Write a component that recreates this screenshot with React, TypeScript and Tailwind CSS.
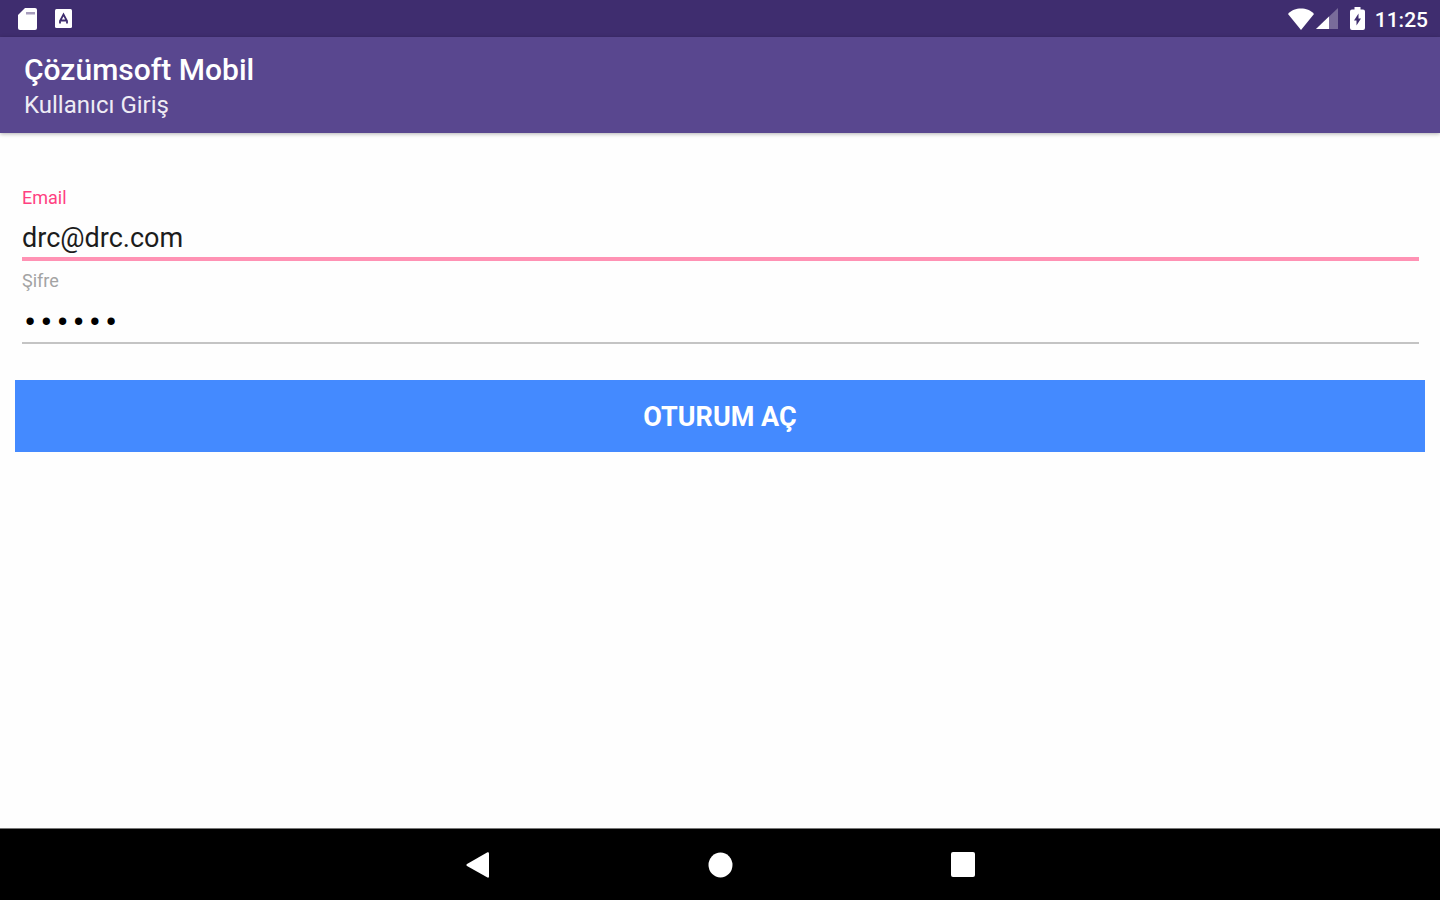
import { useState } from "react"

function StatusBar() {
  return (
    <div className="flex h-[37px] flex-none items-center justify-between bg-[#3f2d6f] pl-[18px] pr-3 text-white">
      <div className="flex items-center gap-[18px]">
        {/* SD card */}
        <svg width="19" height="22" viewBox="0 0 19 22" aria-hidden="true">
          <path d="M7 0h10a2 2 0 0 1 2 2v18a2 2 0 0 1-2 2H2a2 2 0 0 1-2-2V7z" fill="#fff" />
          <path d="M8 4h9v2.500H8z" fill="#a79dbc" />
        </svg>
        <svg width="17" height="19" viewBox="0 0 17 19" aria-hidden="true">
          <rect width="17" height="19" rx="1.500" fill="#fff" />
          <path d="M5 14.500v-2.500l3.500-6.500 3.500 6.500v2.500M6 11.500h5" fill="none" stroke="#3f2d6f" strokeWidth="1.800" />
        </svg>
      </div>
      <div className="flex items-center">
        {/* Wifi */}
        <svg width="26" height="22" viewBox="0 0 26 22" aria-hidden="true">
          <path d="M0 6C3.500 2 8 0.500 13 0.500s9.500 1.500 13 5.500L13 22z" fill="#fff" />
        </svg>
        {/* Cell signal */}
        <svg className="ml-0.5" width="22" height="21" viewBox="0 0 22 21" aria-hidden="true">
          <path d="M22 0v21H0z" fill="#fff" fillOpacity="0.3" />
          <path d="M13 8.600v12.400H0z" fill="#fff" />
        </svg>
        {/* Battery */}
        <svg className="ml-3" width="15" height="23" viewBox="0 0 15 23" aria-hidden="true">
          <path d="M4.500 0h6v2.500H13a2 2 0 0 1 2 2V21a2 2 0 0 1-2 2H2a2 2 0 0 1-2-2V4.500a2 2 0 0 1 2-2h2.500z" fill="#fff" />
          <path d="M8.500 6.500v5h2.500l-4.500 7v-5H4z" fill="#3f2d6f" />
        </svg>
        <span className="ml-2.5 pt-0.5 text-[21px] font-medium leading-6">11:25</span>
      </div>
    </div>
  )
}

function NavBar() {
  return (
    <nav className="flex h-[72px] flex-none items-center justify-center gap-[195px] border-t border-[#777] bg-black">
      <button type="button" aria-label="Back" className="flex h-12 w-12 items-center justify-center">
        <svg width="24" height="26" viewBox="0 0 24 26" aria-hidden="true">
          <path d="M22.500 0.300Q24 0 24 1.500v23q0 1.500-1.500 1L2 14q-1.500-1 0-2z" fill="#fff" />
        </svg>
      </button>
      <button type="button" aria-label="Home" className="flex h-12 w-12 items-center justify-center">
        <svg width="25" height="26" viewBox="0 0 25 26" aria-hidden="true">
          <ellipse cx="12.500" cy="13" rx="12" ry="12.500" fill="#fff" />
        </svg>
      </button>
      <button type="button" aria-label="Recent apps" className="flex h-12 w-12 items-center justify-center">
        <svg width="24" height="25" viewBox="0 0 24 25" aria-hidden="true">
          <rect width="24" height="25" rx="2" fill="#fff" />
        </svg>
      </button>
    </nav>
  )
}

export default function App() {
  const [email, setEmail] = useState("drc@drc.com")
  const [password, setPassword] = useState("123456")

  return (
    <div className="flex min-h-screen flex-col bg-[#fefefe] font-[Roboto,sans-serif]">
      <StatusBar />

      <header className="flex-none bg-[#59478f] px-6 pb-2.5 pt-[15px] text-white shadow-[0_1px_4px_rgba(0,0,0,0.3)]">
        <h1 className="text-[30px] font-medium leading-9">Çözümsoft Mobil</h1>
        <p className="text-[24px] leading-[35px] text-[#eeecf4]">Kullanıcı Giriş</p>
      </header>

      <main className="flex-1 px-[15px] pt-[53px]">
        <form onSubmit={(e) => e.preventDefault()}>
          <div className="pl-[7px] pr-1.5">
            <label htmlFor="email" className="block text-[18px] leading-6 text-[#ff4081]">
              Email
            </label>
            <input
              id="email"
              type="email"
              value={email}
              onChange={(e) => setEmail(e.target.value)}
              className="block h-[51px] w-full border-b-4 border-[#ff92b4] pt-2 text-[27px] text-[#1c1c1c] outline-none"
            />
          </div>
          <div className="pl-[7px] pr-1.5 pt-2">
            <label htmlFor="password" className="block text-[18px] leading-6 text-[#a3a3a3]">
              Şifre
            </label>
            <input
              id="password"
              type="password"
              value={password}
              onChange={(e) => setPassword(e.target.value)}
              className="block h-[51px] w-full border-b-2 border-[#c4c4c4] pt-2.5 font-['Liberation_Mono',monospace] text-[27px] text-black outline-none"
            />
          </div>
          <button
            type="submit"
            className="mt-9 h-[72px] w-full bg-[#448aff] pt-0.5 text-[27px] font-bold text-white"
          >
            OTURUM AÇ
          </button>
        </form>
      </main>

      <NavBar />
    </div>
  )
}
